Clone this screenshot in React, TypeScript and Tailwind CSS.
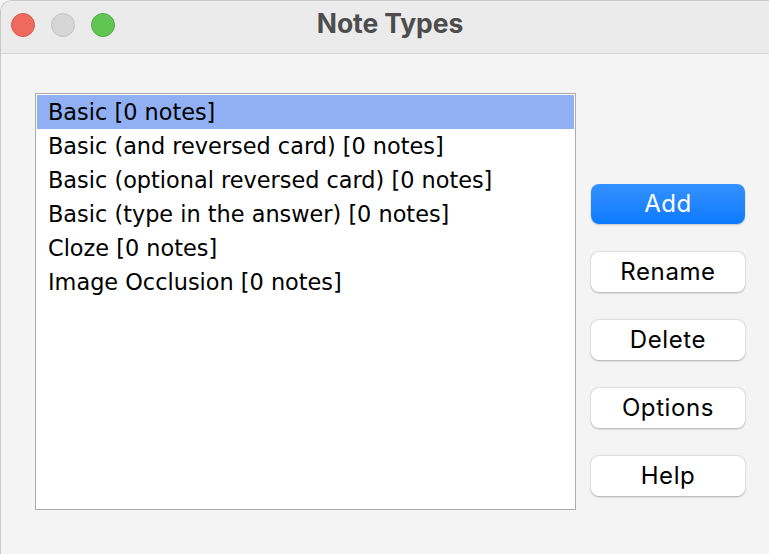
export default function App() {
  const noteTypes = [
    'Basic [0 notes]',
    'Basic (and reversed card) [0 notes]',
    'Basic (optional reversed card) [0 notes]',
    'Basic (type in the answer) [0 notes]',
    'Cloze [0 notes]',
    'Image Occlusion [0 notes]',
  ]
  const buttons = ['Add', 'Rename', 'Delete', 'Options', 'Help']

  return (
    <div className="h-[554px] w-[769px] overflow-hidden bg-[#f5f5f5]">
      <div className="h-full bg-[#f4f4f4] rounded-tl-[12px] border-l border-t border-[#c9c9c9] flex flex-col">
        {/* Title bar */}
        <div className="relative h-[53px] shrink-0 bg-[#ebebeb] border-b border-[#d5d5d5] flex items-center justify-center rounded-tl-[12px]">
          <div className="absolute left-[10px] top-[12px] flex gap-[16px]">
            <span className="w-[24px] h-[24px] rounded-full bg-[#ee6a5f] border border-[#d85a4f]" />
            <span className="w-[24px] h-[24px] rounded-full bg-[#d6d6d6] border border-[#c2c2c2]" />
            <span className="w-[24px] h-[24px] rounded-full bg-[#61c554] border border-[#52ad46]" />
          </div>
          <h1 className="ml-[10px] text-[26.5px] font-bold text-[#4d4d4d] font-['Inter',sans-serif] tracking-[-0.1px] mt-[-6px]">
            Note Types
          </h1>
        </div>

        {/* Body */}
        <div className="flex gap-[15px] pl-[34px] pt-[39px]">
          <div className="w-[541px] h-[417px] bg-white border border-[#ababab] p-px">
            {noteTypes.map((t, i) => (
              <div
                key={t}
                className={`h-[34px] leading-[34px] pl-[11px] text-[22.4px] text-black font-['DejaVu_Sans',sans-serif] whitespace-nowrap ${
                  i === 0 ? 'bg-[#91b0f3]' : ''
                }`}
              >
                {t}
              </div>
            ))}
          </div>

          <div className="flex flex-col gap-[28px] pt-[91px]">
            {buttons.map(b => (
              <button
                key={b}
                className={`w-[154px] h-[40px] rounded-[8px] text-[24px] tracking-[0.6px] font-['Inter',sans-serif] ${
                  b === 'Add'
                    ? 'bg-gradient-to-b from-[#3391ff] to-[#0a7aff] text-white shadow-[0_1px_2px_rgba(0,0,0,0.2)]'
                    : 'bg-white text-black shadow-[0_0.5px_2px_rgba(0,0,0,0.3)]'
                }`}
              >
                {b}
              </button>
            ))}
          </div>
        </div>
      </div>
    </div>
  )
}
